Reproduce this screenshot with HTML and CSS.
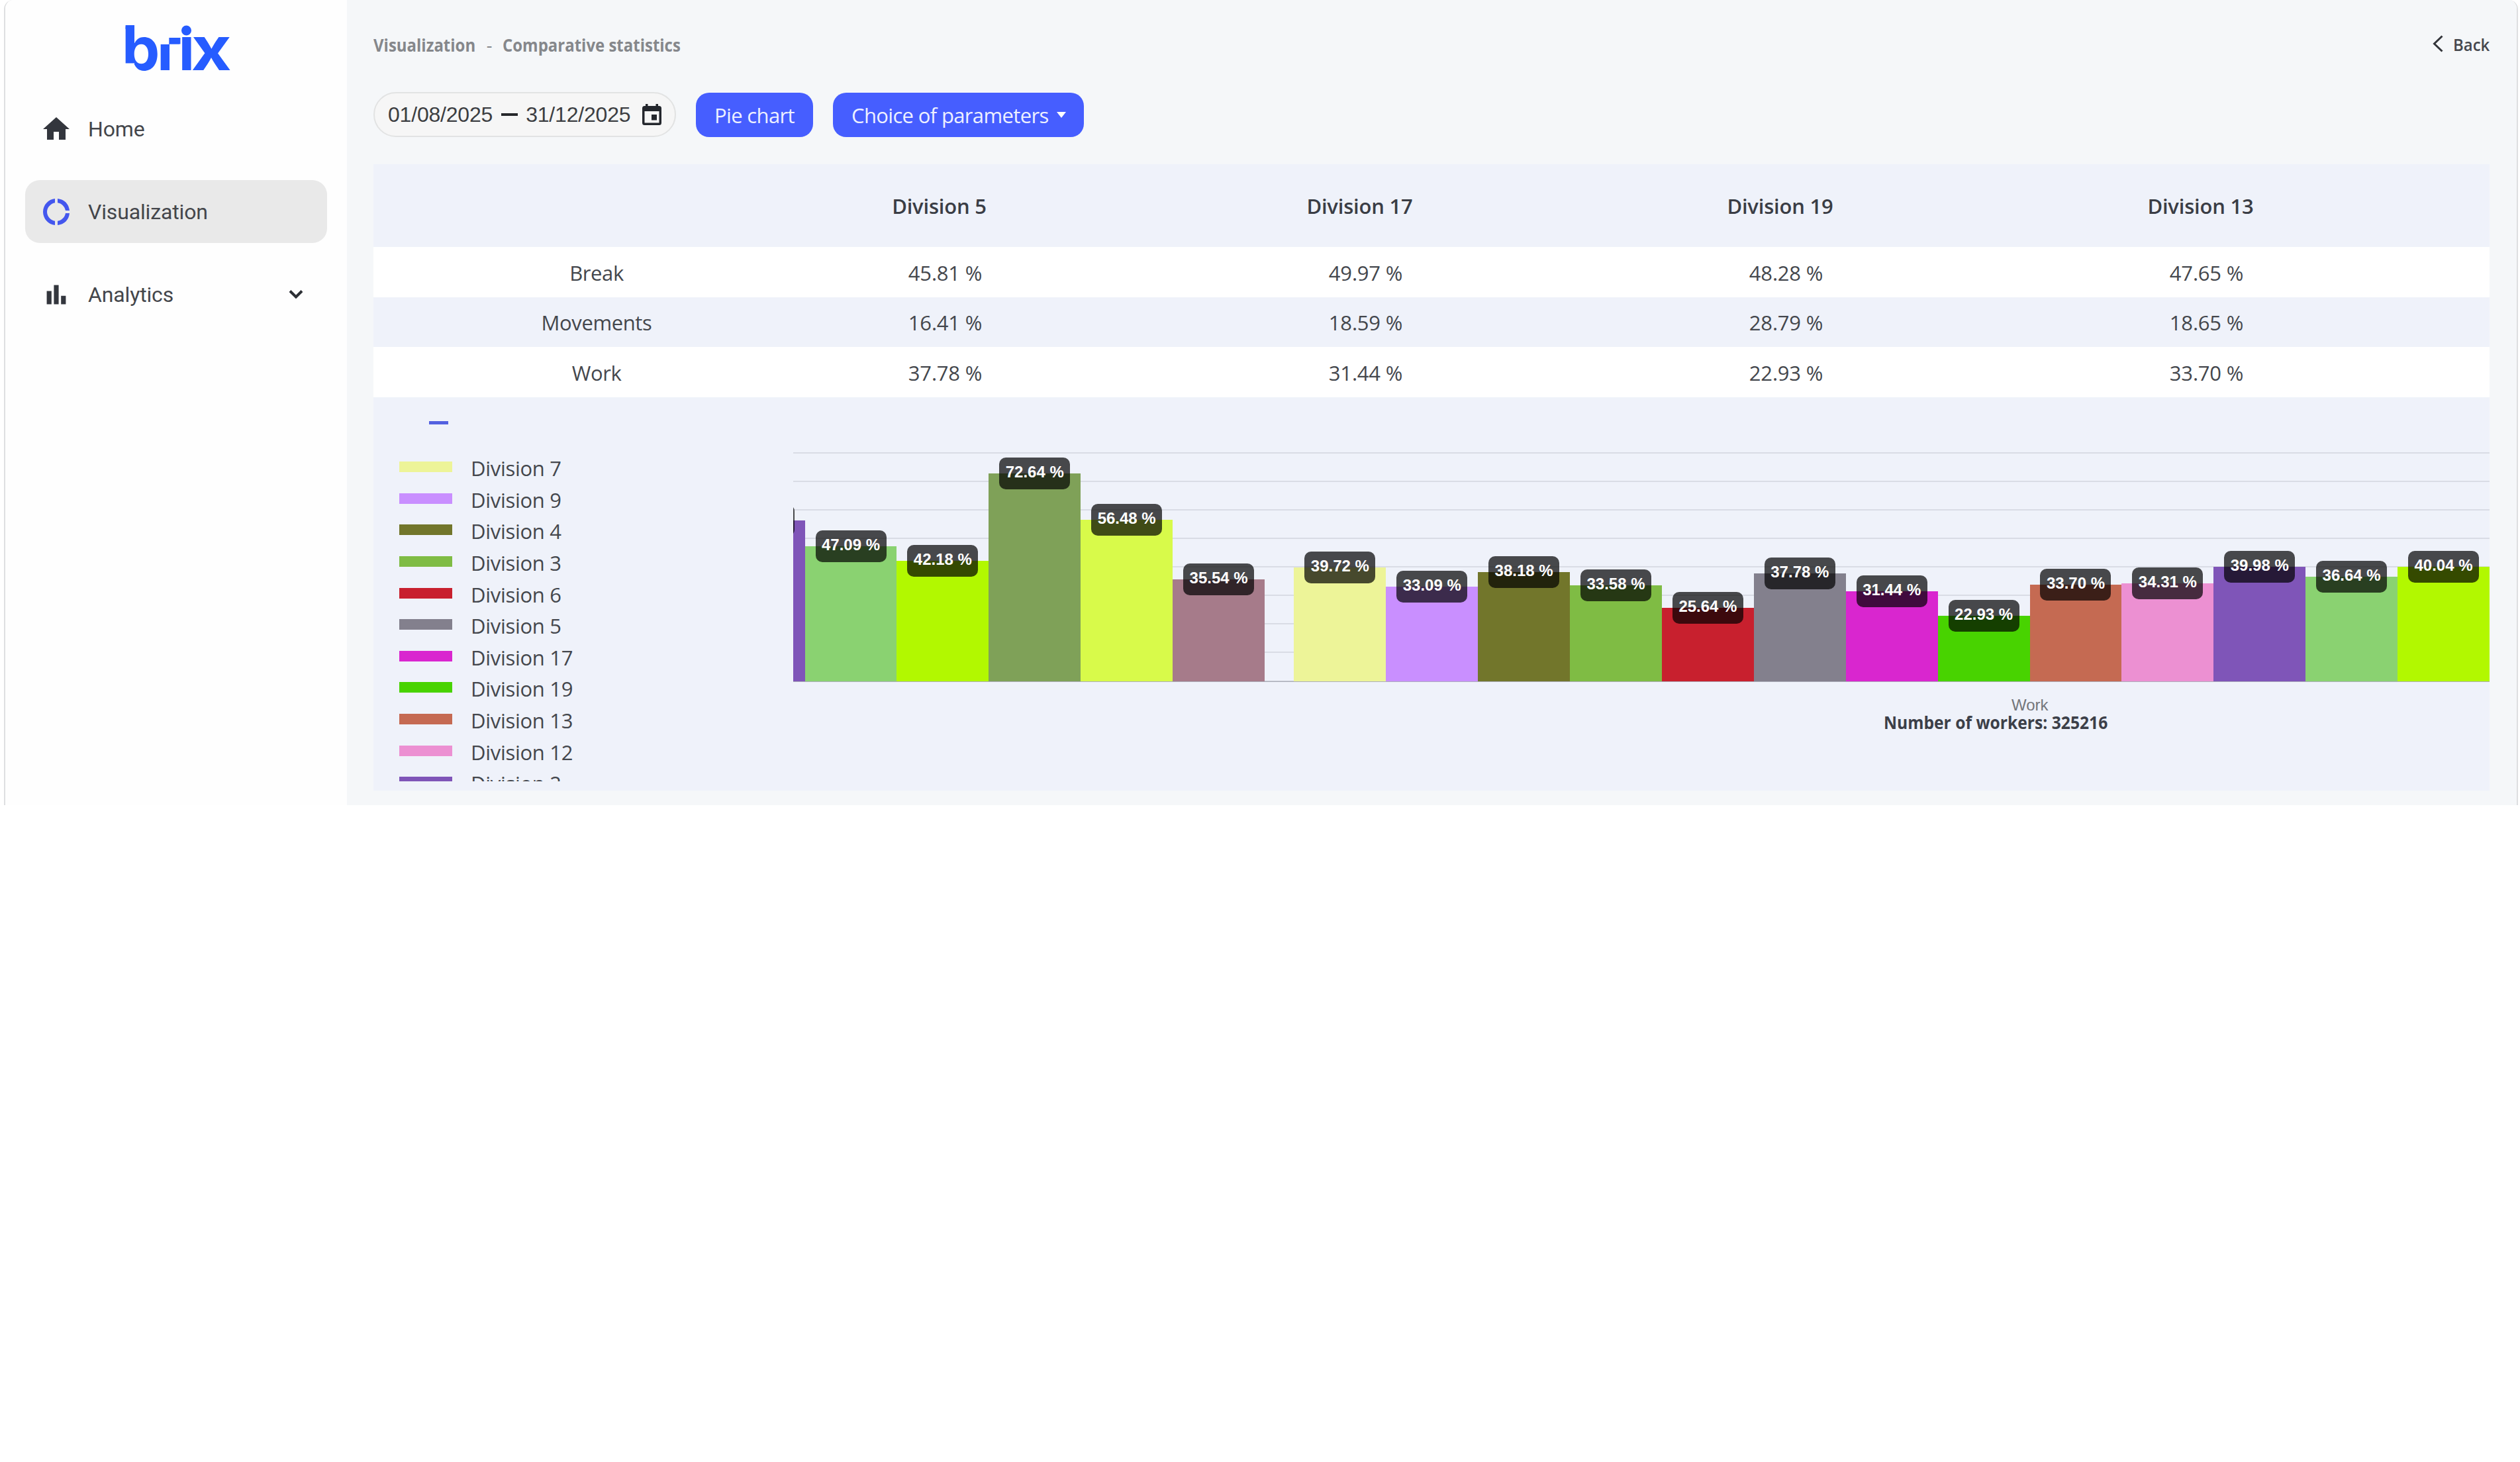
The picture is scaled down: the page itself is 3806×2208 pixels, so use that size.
FILE: index.html
```html
<!DOCTYPE html>
<html lang="en">
<head>
<meta charset="utf-8">
<title>brix - Comparative statistics</title>
<link rel="stylesheet" href="styles.css">
</head>
<body>
<div class="app">
  <aside class="sidebar">
    <div class="brand">
      <svg width="164" height="76" viewBox="0 0 164 76" role="img" aria-label="brix">
        <text class="brand-text" x="-5 48 80.500" y="72">bri</text>
        <text class="brand-text" transform="translate(99.800 72) scale(1.155 1)">x</text>
        <path class="brand-cut" d="M0 61.500h14v14H0zM52 18h14.500v15H52zM66.500 18H84v5H66.500zM67 32.500h17V46H67zM82 0h22v21H82z"/>
        <path class="brand-dot" d="M.6 4H14v6H.6zM66.500 23H82v9.500H66.500z"/>
        <circle class="brand-dot" cx="92.500" cy="12" r="7.500"/>
      </svg>
    </div>
    <nav class="nav">
      <a class="nav-item"><svg class="nav-icon" viewBox="0 0 24 24"><path d="M10 20v-6h4v6h5v-8h3L12 3 2 12h3v8z"/></svg><span>Home</span></a>
      <a class="nav-item active"><svg class="nav-icon" viewBox="0 0 24 24"><path d="M11 5.080V2c-5 .5-9 4.810-9 10s4 9.500 9 10v-3.080c-3-.48-6-3.400-6-6.920s3-6.440 6-6.920zM18.970 11H22c-.47-5-4-8.530-9-9v3.080C16 5.510 18.540 8 18.970 11zM13 18.920V22c5-.47 8.530-4 9-9h-3.030c-.43 3-2.970 5.490-5.970 5.920z"/></svg><span>Visualization</span></a>
      <a class="nav-item"><svg class="nav-icon" viewBox="0 0 24 24"><path d="M4 9h4v11H4zM16 13h4v7h-4zM10 4h4v16h-4z" transform="translate(1.200 1.200) scale(.9)"/></svg><span>Analytics</span><svg class="nav-chevron" viewBox="0 0 22 15"><path d="M2 2.500l9 9 9-9"/></svg></a>
    </nav>
  </aside>
  <main class="main">
    <header class="topbar">
      <div class="crumbs"><span class="crumb">Visualization</span><span class="sep">-</span><span class="crumb">Comparative statistics</span></div>
      <a class="back"><svg viewBox="0 0 16 26"><path d="M14.500 1.500L2.500 13l12 11.500"/></svg><span>Back</span></a>
    </header>
    <div class="toolbar">
      <div class="dates"><span>01/08/2025</span><i class="dash"></i><span>31/12/2025</span>
        <svg class="cal" viewBox="0 0 29 32"><path d="M5 0h3.500v3h12V0H24v3h1.500Q29 3 29 6.500v22Q29 32 25.500 32h-22Q0 32 0 28.500v-22Q0 3 3.500 3H5zM3.500 11v17.500h22V11zM14 16h8v8.500h-8z" fill-rule="evenodd"/></svg>
      </div>
      <button class="btn pie"><span>Pie chart</span></button>
      <button class="btn params"><span>Choice of parameters</span><i class="caret"></i></button>
    </div>
    <section class="table">
      <div class="row head"><div></div><div>Division 5</div><div>Division 17</div><div>Division 19</div><div>Division 13</div></div>
      <div class="row"><div>Break</div><div>45.81 %</div><div>49.97 %</div><div>48.28 %</div><div>47.65 %</div></div>
      <div class="row alt"><div>Movements</div><div>16.41 %</div><div>18.59 %</div><div>28.79 %</div><div>18.65 %</div></div>
      <div class="row"><div>Work</div><div>37.78 %</div><div>31.44 %</div><div>22.93 %</div><div>33.70 %</div></div>
    </section>
    <section class="chart">
      <div class="side">
        <div class="collapse"><i></i></div>
        <ul class="legend">
          <li><i class="d7"></i><span>Division 7</span></li>
          <li><i class="d9"></i><span>Division 9</span></li>
          <li><i class="d4"></i><span>Division 4</span></li>
          <li><i class="d3"></i><span>Division 3</span></li>
          <li><i class="d6"></i><span>Division 6</span></li>
          <li><i class="d5"></i><span>Division 5</span></li>
          <li><i class="d17"></i><span>Division 17</span></li>
          <li><i class="d19"></i><span>Division 19</span></li>
          <li><i class="d13"></i><span>Division 13</span></li>
          <li><i class="d12"></i><span>Division 12</span></li>
          <li><i class="d2"></i><span>Division 2</span></li>
        </ul>
      </div>
      <div class="view">
        <div class="plot">
          <div class="lines"><i></i><i></i><i></i><i></i><i></i><i></i><i></i><i></i></div>
          <div class="bars">
            <div class="bar d2" style="--v:56.3"><b></b></div>
            <div class="bar da" style="--v:47.09"><b>47.09 %</b></div>
            <div class="bar db" style="--v:42.18"><b>42.18 %</b></div>
            <div class="bar dc" style="--v:72.64"><b>72.64 %</b></div>
            <div class="bar dd" style="--v:56.48"><b>56.48 %</b></div>
            <div class="bar de" style="--v:35.54"><b>35.54 %</b></div>
            <div class="bar d7 next" style="--v:39.72"><b>39.72 %</b></div>
            <div class="bar d9" style="--v:33.09"><b>33.09 %</b></div>
            <div class="bar d4" style="--v:38.18"><b>38.18 %</b></div>
            <div class="bar d3" style="--v:33.58"><b>33.58 %</b></div>
            <div class="bar d6" style="--v:25.64"><b>25.64 %</b></div>
            <div class="bar d5" style="--v:37.78"><b>37.78 %</b></div>
            <div class="bar d17" style="--v:31.44"><b>31.44 %</b></div>
            <div class="bar d19" style="--v:22.93"><b>22.93 %</b></div>
            <div class="bar d13" style="--v:33.70"><b>33.70 %</b></div>
            <div class="bar d12" style="--v:34.31"><b>34.31 %</b></div>
            <div class="bar d2" style="--v:39.98"><b>39.98 %</b></div>
            <div class="bar da" style="--v:36.64"><b>36.64 %</b></div>
            <div class="bar db" style="--v:40.04"><b>40.04 %</b></div>
          </div>
        </div>
        <div class="axis-label">Work</div>
        <div class="workers"><span>Number of workers: 325216</span></div>
      </div>
    </section>
  </main>
</div>
</body>
</html>
```
FILE: styles.css
```css
* { box-sizing: border-box; }
body { margin: 0; background: #fff; color: #44474d; font-family: "Open Sans", "Noto Sans", sans-serif; }
i, b { font-style: normal; display: block; }
.app { display: flex; height: 1216px; margin: 0 3px 0 6px; border: 2px solid #dedfe1; border-width: 0 2px; border-radius: 14px 14px 0 0; overflow: hidden; }

.sidebar { width: 516px; flex: none; background: #fefefe; font-family: Roboto, sans-serif; }
.brand { height: 147px; padding: 34px 0 0 181px; }
.brand svg { display: block; overflow: visible; }
.brand-text { font: 700 91px Inter, sans-serif; fill: #265cff; }
.brand-cut { fill: #fefefe; }
.brand-dot { fill: #265cff; }
.nav { display: flex; flex-direction: column; gap: 30px; padding: 0 30px; }
.nav-item { display: flex; align-items: center; height: 95px; padding: 0 36px 0 23px; border-radius: 22px; font-size: 32px; letter-spacing: -.15px; color: #44464b; }
.nav-item.active { background: #e9e9e9; }
.nav-icon { width: 48px; height: 48px; margin-right: 24px; fill: #33363d; }
.active .nav-icon { fill: #4457ee; }
.nav-chevron { width: 22px; height: 15px; margin-left: auto; fill: none; stroke: #2c2f35; stroke-width: 4; }

.main { flex: 1; min-width: 0; padding: 47px 41px 0 40px; background: #f5f7f9; }
.topbar { display: flex; justify-content: space-between; height: 40px; margin-bottom: 52px; line-height: 40px; }
.crumbs { display: flex; padding-top: 1px; font-size: 27px; font-weight: 700; color: #85878b; }
.crumb { width: 155px; transform: scaleX(.888); transform-origin: 0 0; white-space: nowrap; }
.sep { width: 40px; text-align: center; font-weight: 400; }
.back { display: flex; gap: 15px; font-size: 26px; font-weight: 600; line-height: 40px; color: #45474d; }
.back span { width: 55px; transform: scaleX(.92); transform-origin: 0 0; }
.back svg { width: 16px; height: 26px; margin-top: 6px; fill: none; stroke: #33353a; stroke-width: 3; }
.toolbar { display: flex; height: 68px; margin-bottom: 41px; }
.dates { display: flex; align-items: center; width: 457px; margin-right: 30px; padding-left: 20px; border: 2px solid #e2e3e3; border-radius: 34px; background: #f6f6f6; font: 32px "Liberation Sans", sans-serif; letter-spacing: -.2px; color: #3c3e42; }
.dash { width: 25px; height: 4px; margin: 0 12px 0 13px; background: #26282b; }
.cal { width: 29px; height: 32px; margin-left: 18px; fill: #24272d; }
.btn { display: flex; align-items: center; height: 67px; margin: 1px 30px 0 0; padding: 0 0 0 28px; border: 0; border-radius: 20px; background: #465eff; color: #edf0ff; font: 31px "Open Sans", sans-serif; letter-spacing: -.65px; white-space: nowrap; }
.pie { width: 177px; }
.params { width: 379px; }
.caret { width: 14px; margin-left: 12px; border: 7px solid transparent; border-top: 9px solid #fff; border-bottom: 0; }

.row { display: grid; grid-template-columns: 546px repeat(4, 635px); align-items: center; height: 75.500px; padding-top: 2px; overflow: hidden; background: #fff; font-size: 31px; letter-spacing: -.2px; text-align: center; }
.row > :first-child { padding-left: 128px; letter-spacing: -.4px; }
.row.alt, .row.head, .chart { background: #eff2fa; }
.row.head { height: 125px; padding-top: 0; font-weight: 600; color: #3a3d45; }
.row.head div { padding-right: 18px; }

.chart { display: flex; height: 594px; }
.side { width: 634px; flex: none; }
.collapse { height: 82px; padding: 36px 0 0 84px; }
.collapse i { width: 29px; height: 5px; background: #5361e0; }
.legend { height: 498px; margin: 0; padding: 0 0 0 39px; overflow: hidden; list-style: none; font-size: 31px; letter-spacing: -.3px; }
.legend li { display: flex; align-items: center; gap: 28px; height: 47.600px; line-height: 44px; }
.legend span { margin-top: 4px; }
.legend i { width: 80px; height: 16px; }
.view { flex: 1; min-width: 0; padding-top: 33px; }
.plot { display: grid; height: 397px; overflow: hidden; }
.lines, .bars { grid-area: 1 / 1; min-width: 0; }
.lines { display: flex; flex-direction: column; margin-top: 50px; border-bottom: 2px solid #c5c8d0; }
.lines i { flex: 1; border-top: 2px solid #d9dce5; }
.bars { display: flex; justify-content: flex-end; align-items: flex-end; border-bottom: 1px solid rgba(150, 150, 165, .5); }
.bar { display: flex; flex: none; justify-content: center; align-items: flex-start; width: 138.900px; height: calc(var(--v) * 4.3125px); }
.bar.next { margin-left: 44.400px; }
.bar b { width: 107px; height: 48px; margin-top: -24px; border-radius: 10px; background: rgba(0, 0, 0, .7); color: #fff; font: 700 24px/44px "Liberation Sans", sans-serif; text-align: center; white-space: nowrap; }
.axis-label { height: 28px; margin: 21px 0 0; padding-left: 1840px; font: 24px/28px "Liberation Sans", sans-serif; color: #74767b; }
.workers { padding-left: 1647px; font-size: 27px; font-weight: 700; line-height: 24px; color: #3c3f48; }
.workers span { display: inline-block; transform: scaleX(.913); transform-origin: 0 0; white-space: nowrap; }

.d7 { background: #edf498; }
.d9 { background: #c98fff; }
.d4 { background: #72762b; }
.d3 { background: #7fbc44; }
.d6 { background: #c8202e; }
.d5 { background: #83808d; }
.d17 { background: #d926cf; }
.d19 { background: #48d300; }
.d13 { background: #c56a52; }
.d12 { background: #ec90d2; }
.d2 { background: #7f55b8; }
.da { background: #8ad271; }
.db { background: #b2f800; }
.dc { background: #7fa158; }
.dd { background: #d8fa4a; }
.de { background: #a67b8a; }
```
